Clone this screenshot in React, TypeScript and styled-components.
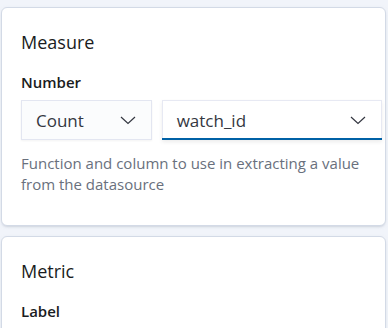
import styled, { createGlobalStyle } from 'styled-components';

const GlobalStyle = createGlobalStyle`
  html, body {
    margin: 0;
    padding: 0;
    background: #f1f4fa;
    font-family: 'Open Sans', 'Noto Sans', sans-serif;
    color: #1a1c21;
  }
`;

const Page = styled.div`
  display: flex;
  flex-direction: column;
  gap: 10px;
  padding: 7px 2px 0 1px;
  height: 328px;
  box-sizing: border-box;
  overflow: hidden;
`;

const Card = styled.section`
  background: #fff;
  border: 1px solid #d3dae6;
  border-radius: 6px;
  box-shadow: 0 2px 2px -1px rgba(152, 162, 179, 0.3), 0 1px 5px -2px rgba(152, 162, 179, 0.3);
  padding: 22px 3px 30px 19px;
  flex-shrink: 0;
`;

const Title = styled.h2`
  margin: 0 0 18px;
  font-size: 18px;
  line-height: 24px;
  font-weight: 400;
  color: #1a1c21;
`;

const FieldLabel = styled.div`
  font-size: 15px;
  line-height: 20px;
  font-weight: 600;
  color: #1a1c21;
  margin-bottom: 8px;
`;

const SelectRow = styled.div`
  display: flex;
  gap: 10px;
`;

const Select = styled.div<{ $width: number; $active?: boolean }>`
  box-sizing: border-box;
  width: ${(p) => p.$width}px;
  height: 40px;
  display: flex;
  align-items: center;
  justify-content: space-between;
  padding: 0 16px 0 15px;
  font-size: 17px;
  color: #343741;
  background: ${(p) => (p.$active ? '#fff' : '#fbfcfd')};
  box-shadow: ${(p) =>
    p.$active
      ? 'inset 0 -2px 0 0 #0061a6, inset 0 0 0 1px rgba(17, 43, 134, 0.1), 0 2px 4px rgba(0, 0, 0, 0.08)'
      : 'inset 0 0 0 1px rgba(17, 43, 134, 0.1), 0 1px 2px rgba(0, 0, 0, 0.05)'};
`;

const Chevron = () => (
  <svg width="16" height="16" viewBox="0 0 16 16" fill="none">
    <path d="M1 5l7 6.5L15 5" stroke="#343741" strokeWidth="1.2" />
  </svg>
);

const HelpText = styled.p`
  margin: 13px 0 0;
  font-size: 15px;
  line-height: 21px;
  color: #69707d;
  padding-right: 20px;
`;

const App = () => (
  <>
    <GlobalStyle />
    <Page>
      <Card>
        <Title>Measure</Title>
        <FieldLabel>Number</FieldLabel>
        <SelectRow>
          <Select $width={131}>
            Count
            <Chevron />
          </Select>
          <Select $width={221} $active>
            watch_id
            <Chevron />
          </Select>
        </SelectRow>
        <HelpText>Function and column to use in extracting a value from the datasource</HelpText>
      </Card>
      <Card>
        <Title>Metric</Title>
        <FieldLabel>Label</FieldLabel>
        <SelectRow>
          <Select $width={362}>&nbsp;</Select>
        </SelectRow>
      </Card>
    </Page>
  </>
);

export default App;
